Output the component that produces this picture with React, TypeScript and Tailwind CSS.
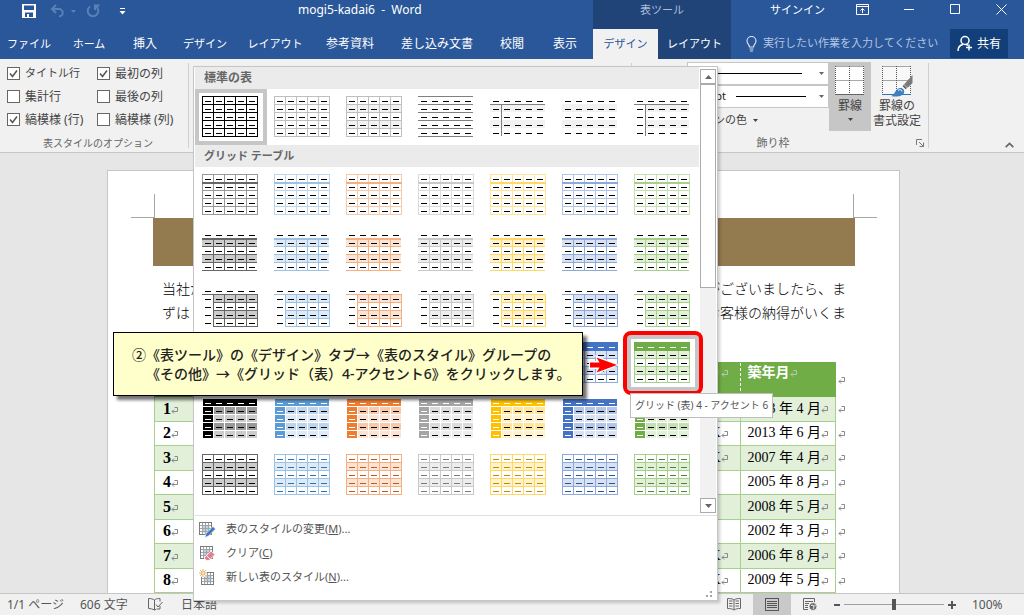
import React from "react";
import { clsx } from "clsx";

const UI_FONT = "font-['Noto_Sans','Noto_Sans_CJK_JP',sans-serif]";
const DOC_FONT = "font-['Liberation_Serif','Noto_Sans_CJK_JP',serif]";

type Palette = { name: string; light: string; mid: string; fill: string; band: string; text: string };

const PALETTES: Palette[] = [
  { name: "標準", light: "#999999", mid: "#666666", fill: "#000000", band: "#cccccc", text: "#000000" },
  { name: "アクセント 1", light: "#bdd6ee", mid: "#9cc2e5", fill: "#5b9bd5", band: "#deeaf6", text: "#2e74b5" },
  { name: "アクセント 2", light: "#f7caac", mid: "#f4b083", fill: "#ed7d31", band: "#fbe4d5", text: "#c45911" },
  { name: "アクセント 3", light: "#dbdbdb", mid: "#c9c9c9", fill: "#a5a5a5", band: "#ededed", text: "#7b7b7b" },
  { name: "アクセント 4", light: "#ffe599", mid: "#ffd966", fill: "#ffc000", band: "#fff2cc", text: "#bf8f00" },
  { name: "アクセント 5", light: "#b4c6e7", mid: "#8eaadb", fill: "#4472c4", band: "#d9e2f3", text: "#2f5496" },
  { name: "アクセント 6", light: "#c5e0b3", mid: "#a8d08d", fill: "#70ad47", band: "#e2efd9", text: "#538135" },
];

const FIVE = [0, 1, 2, 3, 4];
const SIX = [0, 1, 2, 3, 4, 5];

function Dashes({ color, header, first }: { color: string; header?: string; first?: string }) {
  return (
    <>
      {FIVE.map((r) =>
        FIVE.map((c) => (
          <rect
            key={`${r}-${c}`}
            x={3 + c * 11}
            y={5 + r * 8}
            width={6}
            height={1}
            fill={r === 0 && header ? header : c === 0 && first ? first : color}
          />
        )),
      )}
    </>
  );
}

function Bands({ color, x = 0 }: { color: string; x?: number }) {
  return (
    <>
      <rect x={x} y={8} width={55 - x} height={8} fill={color} />
      <rect x={x} y={24} width={55 - x} height={8} fill={color} />
    </>
  );
}

function Lines({ color, x0 = 0, y0 = 0 }: { color: string; x0?: number; y0?: number }) {
  return (
    <>
      {SIX.filter((i) => i * 11 >= x0).map((i) => (
        <rect key={`v${i}`} x={i * 11} y={y0} width={1} height={41 - y0} fill={color} />
      ))}
      {SIX.filter((i) => i * 8 >= y0).map((i) => (
        <rect key={`h${i}`} x={x0} y={i * 8} width={56 - x0} height={1} fill={color} />
      ))}
    </>
  );
}

function Thumb({ children }: { children: React.ReactNode }) {
  return (
    <svg width="56" height="41" viewBox="0 0 56 41" shapeRendering="crispEdges" className="shrink-0" aria-hidden="true">
      {children}
    </svg>
  );
}

function PlainThumb({ kind }: { kind: number }) {
  return (
    <Thumb>
      {(kind === 2 || kind === 4 || kind === 5) && <Bands color="#f2f2f2" />}
      {kind === 6 && <Bands color="#f2f2f2" x={11} />}
      {kind === 0 && <Lines color="#000" />}
      {(kind === 1 || kind === 2) && <Lines color="#bfbfbf" />}
      {kind === 3 && SIX.map((i) => <rect key={i} x={0} y={i * 8} width={55} height={1} fill="#7f7f7f" />)}
      {(kind === 4 || kind === 6) && (
        <>
          <rect x={0} y={8} width={55} height={1} fill="#7f7f7f" />
          <rect x={11} y={8} width={1} height={32} fill="#7f7f7f" />
        </>
      )}
      <Dashes color="#000" />
    </Thumb>
  );
}

function GridThumb({ row, p }: { row: number; p: Palette }) {
  if (row === 1)
    return (
      <Thumb>
        <Lines color={p.light} />
        <rect x={0} y={8} width={56} height={2} fill={p.mid} />
        <Dashes color="#000" />
      </Thumb>
    );
  if (row === 2)
    return (
      <Thumb>
        <Bands color={p.band} />
        {[11, 22, 33, 44].map((x) => (
          <rect key={x} x={x} y={8} width={1} height={33} fill={p.mid} />
        ))}
        {[16, 24, 32, 40].map((y) => (
          <rect key={y} x={0} y={y} width={55} height={1} fill={p.mid} />
        ))}
        <rect x={0} y={8} width={55} height={2} fill={p.mid} />
        <Dashes color="#000" />
      </Thumb>
    );
  if (row === 3)
    return (
      <Thumb>
        <Bands color={p.band} x={11} />
        <rect x={0} y={8} width={56} height={1} fill={p.mid} />
        <Lines color={p.mid} x0={11} y0={8} />
        <Dashes color="#000" />
      </Thumb>
    );
  if (row === 4)
    return (
      <Thumb>
        <Bands color={p.band} />
        <Lines color={p.mid} />
        <rect x={0} y={0} width={56} height={9} fill={p.fill} />
        <Dashes color="#000" header="#fff" />
      </Thumb>
    );
  if (row === 5)
    return (
      <Thumb>
        <rect x={1} y={1} width={54} height={7} fill={p.fill} />
        {[1, 2, 3, 4].map((r) =>
          FIVE.map((c) => (
            <rect
              key={`${r}-${c}`}
              x={1 + c * 11}
              y={1 + r * 8}
              width={10}
              height={7}
              fill={c === 0 ? p.fill : r % 2 ? p.light : p.band}
            />
          )),
        )}
        <Dashes color="#000" header="#fff" first="#fff" />
      </Thumb>
    );
  return (
    <Thumb>
      <Bands color={p.band} />
      <Lines color={p.mid} />
      <Dashes color={p.text} />
    </Thumb>
  );
}

function Tile({ selected, label, children }: { selected?: boolean; label: string; children: React.ReactNode }) {
  return (
    <button
      type="button"
      aria-label={label}
      className={clsx(
        "flex h-14 w-[72px] border-4 pt-[3px] pl-[3px]",
        selected ? "border-[#c6c6c6]" : "border-transparent",
      )}
    >
      {children}
    </button>
  );
}

function Down({ className }: { className?: string }) {
  return (
    <svg width="5" height="3" viewBox="0 0 5 3" className={className} aria-hidden="true">
      <path d="M0 0h5L2.5 3z" fill="currentColor" />
    </svg>
  );
}

function MiniGrid({ x = 0, y = 0 }: { x?: number; y?: number }) {
  return (
    <g transform={`translate(${x} ${y})`}>
      <rect x=".5" y=".5" width="12" height="12" fill="#fff" />
      <path d="M3.5 3.5h7v7h-7z" fill="#bcd3e8" />
      <path d="M3.500 1v11M6.500 1v11M9.500 1v11M1 3.500h11M1 6.500h11M1 9.500h11" stroke="#a3a3a3" fill="none" />
      <rect x=".5" y=".5" width="12" height="12" fill="none" stroke="#7c7c7c" />
    </g>
  );
}

function EditIcon() {
  return (
    <svg width="17" height="17" viewBox="0 0 17 17" aria-hidden="true">
      <MiniGrid y={1} />
      <path d="M14 5.500l2.500 2.500-7 7-3.500 1.500 1-4z" fill="#3c7abf" stroke="#fff" strokeWidth=".6" />
    </svg>
  );
}
function EraseIcon() {
  return (
    <svg width="17" height="17" viewBox="0 0 17 17" aria-hidden="true">
      <MiniGrid x={1} y={1} />
      <path d="M12 6l4 3.500-6 6H7.500L5 13z" fill="#e57f92" stroke="#fff" strokeWidth=".8" />
      <path d="M7.500 10.500l3.500 3.500" stroke="#fff" strokeWidth=".8" />
    </svg>
  );
}
function NewIcon() {
  return (
    <svg width="17" height="17" viewBox="0 0 17 17" aria-hidden="true">
      <MiniGrid x={2} y={3} />
      <circle cx="4" cy="4" r="4" fill="#fff" />
      <path d="M4 0v8M0 4h8M1.200 1.200l5.600 5.600M6.800 1.200L1.200 6.800" stroke="#e3a94b" strokeWidth=".9" />
      <circle cx="4" cy="4" r="1.400" fill="#fff" stroke="#e3a94b" strokeWidth=".7" />
    </svg>
  );
}

function Gallery() {
  const commands = [
    { icon: <EditIcon />, text: "表のスタイルの変更", key: "M", dots: true },
    { icon: <EraseIcon />, text: "クリア", key: "C", dots: false },
    { icon: <NewIcon />, text: "新しい表のスタイル", key: "N", dots: true },
  ];
  const heading = "flex h-[22px] items-center bg-[#ebebeb] pl-[9px] font-bold text-[#666]";
  return (
    <section
      aria-label="表のスタイル"
      className="absolute top-[7px] left-1 z-10 w-[525px] border border-[#c6c6c6] bg-white pl-px shadow-[2px_2px_3px_rgba(0,0,0,0.2)]"
    >
      <div className="flex border-b border-[#e1e1e1]">
        <div className="w-[504px]">
          <h2 className={clsx(heading, "text-xs")}>標準の表</h2>
          <div className="grid grid-cols-7">
            {[0, 1, 2, 3, 4, 5, 6].map((k) => (
              <Tile key={k} selected={k === 0} label={`標準の表 ${k + 1}`}>
                <PlainThumb kind={k} />
              </Tile>
            ))}
          </div>
          <h2 className={clsx(heading, "text-[11px]")}>グリッド テーブル</h2>
          <div className="grid grid-cols-7 pb-3">
            {[1, 2, 3, 4, 5, 6].map((row) =>
              PALETTES.map((p, c) => (
                <div key={`${row}-${p.name}`} className="relative">
                  <Tile selected={row === 4 && c === 6} label={`グリッド (表) ${row} - ${p.name}`}>
                    <GridThumb row={row} p={p} />
                  </Tile>
                  {row === 4 && c === 6 && (
                    <div className="pointer-events-none absolute -inset-1 z-20 rounded-lg border-4 border-[#ff0000]">
                      <div
                        role="tooltip"
                        className="absolute top-[58px] left-[3px] flex h-[25px] items-center border border-[#bdbdbd] bg-white px-1 text-[10px] whitespace-nowrap text-[#555]"
                      >
                        グリッド (表) 4 - アクセント 6
                      </div>
                    </div>
                  )}
                </div>
              )),
            )}
          </div>
        </div>
        <div className="my-0.5 ml-px flex w-4 flex-col bg-[#f1f1f1]">
          <button type="button" aria-label="上へ" className="flex h-[15px] items-center justify-center border border-[#ababab] bg-white">
            <svg width="7" height="4" viewBox="0 0 7 4" aria-hidden="true">
              <path d="M0 4h7L3.500 0z" fill="#666" />
            </svg>
          </button>
          <div className="h-[204px] border border-[#ababab] bg-white" />
          <button type="button" aria-label="下へ" className="mt-auto flex h-[15px] items-center justify-center border border-[#ababab] bg-white">
            <svg width="7" height="4" viewBox="0 0 7 4" aria-hidden="true">
              <path d="M0 0h7L3.500 4z" fill="#666" />
            </svg>
          </button>
        </div>
      </div>
      <div className="flex flex-col pt-px">
        {commands.map((c) => (
          <button key={c.key} type="button" className="flex h-6 items-center gap-2.5 pl-1 text-[11px] text-[#555]">
            {c.icon}
            <span>
              {c.text}(<span className="underline">{c.key}</span>){c.dots && "..."}
            </span>
          </button>
        ))}
      </div>
      <div className="flex h-[11px] items-end justify-end pr-1 pb-0.5">
        <svg width="7" height="7" viewBox="0 0 7 7" shapeRendering="crispEdges" aria-hidden="true">
          <path d="M4 0h2v2H4zM4 4h2v2H4zM0 4h2v2H0z" fill="#a6a6a6" />
        </svg>
      </div>
    </section>
  );
}

function Header() {
  const tabs = [
    { t: "ファイル", w: "w-[58px]", s: "text-[11px]" },
    { t: "ホーム", w: "w-[62px]", s: "text-[11px]" },
    { t: "挿入", w: "w-[50px]", s: "text-xs" },
    { t: "デザイン", w: "w-[70px]", s: "text-[11px]" },
    { t: "レイアウト", w: "w-[70px]", s: "text-[11px]" },
    { t: "参考資料", w: "w-[80px]", s: "text-xs" },
    { t: "差し込み文書", w: "w-[94px]", s: "text-xs" },
    { t: "校閲", w: "w-[56px]", s: "text-xs" },
    { t: "表示", w: "w-[50px]", s: "text-xs" },
  ];
  return (
    <header className="flex h-[59px] bg-[#2a579a] text-white">
      <div className="flex w-[593px] flex-col">
        <div className="flex h-[29px] items-start">
          <div className="flex w-[298px] items-center gap-2 pt-1 pl-[22px]">
            <button type="button" aria-label="上書き保存">
              <svg width="14" height="14" viewBox="0 0 14 14" aria-hidden="true">
                <path d="M0 0h14v14H0zM2 1.500v4.500h10V1.500zM3 8.500V13h2v-3h2v3h4V8.500z" fill="#fff" fillRule="evenodd" />
              </svg>
            </button>
            <button type="button" aria-label="元に戻す" className="ml-1.5 flex items-center gap-1.5 text-[#5a80b9]">
              <svg width="15" height="14" viewBox="0 0 15 14" fill="none" stroke="currentColor" strokeWidth="2" aria-hidden="true">
                <path d="M6 1L2 5l4 4M2 5h7a3.700 3.700 0 0 1 0 7.500" />
              </svg>
              <Down />
            </button>
            <button type="button" aria-label="やり直し" className="ml-0.5 text-[#5a80b9]">
              <svg width="15" height="14" viewBox="0 0 15 14" fill="none" stroke="currentColor" strokeWidth="2" aria-hidden="true">
                <path d="M4 2.500a5.300 5.300 0 1 0 5.500-.3M9 6V1.500h4.500" />
              </svg>
            </button>
            <button type="button" aria-label="カスタマイズ" className="ml-2.5">
              <svg width="7" height="7" viewBox="0 0 7 7" aria-hidden="true">
                <path d="M1 0h5v1H1zM.5 3h6L3.500 6.500z" fill="#fff" />
              </svg>
            </button>
          </div>
          <h1 className="pt-0.5 text-xs leading-4 whitespace-pre">{"mogi5-kadai6  -  Word"}</h1>
        </div>
        <nav className="flex h-[30px] items-center">
          {tabs.map((t) => (
            <button key={t.t} type="button" className={clsx("text-center whitespace-nowrap", t.w, t.s)}>
              {t.t}
            </button>
          ))}
        </nav>
      </div>
      <div className="flex w-[138px] flex-col bg-[#214478]">
        <div className="h-[29px] pt-0.5 text-center text-[11px] leading-4 text-[#a9bddb]">表ツール</div>
        <nav className="flex h-[30px] text-[11px]">
          <button type="button" className="w-[65px] bg-[#f1f1f1] text-[#2a579a]">デザイン</button>
          <button type="button" className="flex-1">レイアウト</button>
        </nav>
      </div>
      <div className="flex flex-1 flex-col">
        <div className="flex h-[29px] items-start justify-end pt-0.5">
          <button type="button" className="mr-[31px] text-[11px] leading-4">サインイン</button>
          <div className="flex gap-[35px] pt-0.5 pr-[17px]">
            <button type="button" aria-label="リボンの表示オプション">
              <svg width="13" height="11" viewBox="0 0 13 11" fill="none" stroke="#fff" aria-hidden="true">
                <path d="M.5.5h12v10H.5zM.5 2.500h12M6.500 9V4.500M4.500 6.500l2-2 2 2" />
              </svg>
            </button>
            <button type="button" aria-label="最小化">
              <svg width="11" height="11" viewBox="0 0 11 11" aria-hidden="true"><path d="M0 5h10v1H0z" fill="#fff" /></svg>
            </button>
            <button type="button" aria-label="最大化">
              <svg width="11" height="11" viewBox="0 0 11 11" aria-hidden="true"><path d="M.5.5h9v9h-9z" fill="none" stroke="#fff" /></svg>
            </button>
            <button type="button" aria-label="閉じる">
              <svg width="11" height="11" viewBox="0 0 11 11" aria-hidden="true"><path d="M.5.5l10 10M10.500.5l-10 10" stroke="#fff" /></svg>
            </button>
          </div>
        </div>
        <div className="flex h-[30px] items-start pr-4">
          <label className="flex h-[29px] flex-1 items-center gap-1.5 pl-[15px]">
            <svg width="11" height="16" viewBox="0 0 11 16" fill="none" stroke="#d5dff0" strokeWidth="1.200" aria-hidden="true">
              <path d="M3.500 11C3.500 8.500 1 8 1 5a4.500 4.500 0 0 1 9 0c0 3-2.500 3.500-2.500 6zM3.500 13h4M4 15h3" />
            </svg>
            <input
              aria-label="操作アシスト"
              placeholder="実行したい作業を入力してください"
              className="w-0 min-w-0 flex-1 bg-transparent text-[11px] outline-none placeholder:text-[#b3c5e2]"
            />
          </label>
          <button type="button" className="flex h-[29px] w-[58px] items-center justify-center gap-1 bg-[#123f7a] text-xs">
            <svg width="16" height="17" viewBox="0 0 16 17" fill="none" stroke="#fff" strokeWidth="1.500" aria-hidden="true">
              <circle cx="8" cy="5.500" r="4" />
              <path d="M1 16c0-4 2.500-6 5-6.500M12 9.500v6M9 12.500h6M9 9.500l2 .8" />
            </svg>
            共有
          </button>
        </div>
      </div>
    </header>
  );
}

function Check({ text, checked, small }: { text: string; checked?: boolean; small?: boolean }) {
  return (
    <label className="flex h-[23px] items-center gap-[5px] whitespace-nowrap">
      <span className="grid">
        <input
          type="checkbox"
          defaultChecked={checked}
          className="peer col-start-1 row-start-1 size-[13px] appearance-none border border-[#666] bg-white"
        />
        <svg width="13" height="13" viewBox="0 0 13 13" className="pointer-events-none invisible col-start-1 row-start-1 peer-checked:visible" aria-hidden="true">
          <path d="M3 6.500l2.500 3L10 3.500" fill="none" stroke="#555" strokeWidth="1.500" />
        </svg>
      </span>
      <span className={small ? "text-[11px]" : "text-xs"}>{text}</span>
    </label>
  );
}

function BorderGrid({ brush }: { brush?: boolean }) {
  return (
    <svg width="32" height="32" viewBox="0 0 32 32" aria-hidden="true">
      <rect x="1" y="0" width="29" height="29" fill={brush ? "#f8f8f8" : "#fff"} />
      <path d="M1.500.5h28M1.500 14.500h28M1.500 0v29M15.500 0v29M29.500 0v29" stroke="#555" strokeDasharray="1 1" fill="none" />
      <path d="M1 28.500h29" stroke={brush ? "#2e75b5" : "#666"} />
      {brush && (
        <>
          <path d="M31.500 9v8l-5 5-4-3z" fill="#7a7a7a" />
          <path d="M22.500 18l4 4-2 1.500-3-3z" fill="#666" stroke="#fff" strokeWidth=".6" />
          <path d="M10 30c4-1 4-7 9-8 3 0 5 2 4 5-2 4-9 4-13 3z" fill="#3f7fbf" />
          <path d="M17 24.500c1.500-1.500 4-.8 4 1" stroke="#fff" fill="none" />
        </>
      )}
    </svg>
  );
}

function Ribbon() {
  const caption = "flex h-[18px] items-center text-[#666]";
  const picker = "flex h-[23px] items-center justify-end border border-[#c6c6c6] bg-white pr-1 text-[#666]";
  return (
    <div className="flex h-[94px] border-b border-[#c6c6c6] bg-[#f1f1f1] text-[#444]">
      <div className="flex w-[188px] flex-col justify-between pt-[3px] pl-[7px]">
        <div className="grid grid-cols-[90px_1fr]">
          <Check text="タイトル行" checked small />
          <Check text="最初の列" checked />
          <Check text="集計行" />
          <Check text="最後の列" />
          <Check text="縞模様 (行)" checked />
          <Check text="縞模様 (列)" />
        </div>
        <div className={clsx(caption, "pl-9 text-[10px]")}>表スタイルのオプション</div>
      </div>
      <div className="my-1 w-px bg-[#d0d0d0]" />
      <div className="relative w-[442px]">
        <Gallery />
        <Callout />
      </div>
      <div className="my-1 w-px bg-[#d0d0d0]" />
      <div className="flex w-[296px] flex-col justify-between pt-[3px] pl-[55px]">
        <div className="flex">
          <div className="flex w-[142px] flex-col">
            <button type="button" aria-label="ペンのスタイル" className={picker}>
              <span className="mr-[17px] h-px w-[84px] bg-black" />
              <Down />
            </button>
            <button type="button" aria-label="ペンの太さ" className={picker}>
              <span className="text-[11px] text-[#222]">pt</span>
              <span className="mr-[13px] ml-2.5 h-px w-[70px] bg-black" />
              <Down />
            </button>
            <button type="button" className="flex h-[25px] items-center justify-end gap-1.5 pr-[71px] text-[11px]">
              ペンの色
              <Down />
            </button>
          </div>
          <button type="button" className="flex h-[69px] w-[42px] flex-col items-center bg-[#c6c6c6] pt-1 text-xs leading-4">
            <BorderGrid />
            罫線
            <Down className="mt-1" />
          </button>
          <button type="button" className="flex h-[69px] w-[52px] flex-col items-center pt-1 text-xs leading-[15px] whitespace-nowrap">
            <BorderGrid brush />
            罫線の
            <br />
            書式設定
          </button>
        </div>
        <div className={clsx(caption, "text-[11px]")}>
          <span className="w-[172px] text-center">飾り枠</span>
          <button type="button" aria-label="線種とページ罫線と網かけの設定" className="ml-auto mr-1">
            <svg width="8" height="8" viewBox="0 0 8 8" fill="none" stroke="#777" aria-hidden="true">
              <path d="M.5 6V.5H6M3 3l4 4M7.500 3.500v4h-4" />
            </svg>
          </button>
        </div>
      </div>
      <div className="my-1 w-px bg-[#d0d0d0]" />
      <button type="button" aria-label="リボンを折りたたむ" className="mt-auto mr-2.5 mb-1 ml-auto">
        <svg width="9" height="6" viewBox="0 0 9 6" fill="none" stroke="#666" strokeWidth="1.700" aria-hidden="true">
          <path d="M.7 5.200L4.500 1.500l3.800 3.700" />
        </svg>
      </button>
    </div>
  );
}

function Callout() {
  return (
    <>
      <div className="absolute top-[273px] -left-[76px] z-20 w-[470px] border border-black bg-[#ffffcc] pt-3 pb-3 pl-[18px] text-sm leading-[19px] font-medium whitespace-nowrap text-[#222] shadow-[4px_4px_3px_rgba(0,0,0,0.55)]">
        <p>②《表ツール》の《デザイン》タブ→《表のスタイル》グループの</p>
        <p className="pl-3.5">《その他》→《グリッド（表）4-アクセント6》をクリックします。</p>
      </div>
      <svg width="30" height="20" viewBox="0 0 30 20" className="absolute top-[296px] left-[400px] z-20" aria-hidden="true">
        <path d="M0 6h8L6 0l24 10L6 20l2-6H0z" fill="#fff" />
        <path d="M1 7.500h9.500L7.500 2.500 28 10 7.500 17.500l3-5H1z" fill="#ff0000" />
      </svg>
    </>
  );
}

function Mark({ light }: { light?: boolean }) {
  return (
    <svg width="7" height="7" viewBox="0 0 7 7" className="inline-block" fill="none" stroke={light ? "#b9c8b0" : "#888"} aria-hidden="true">
      <path d="M3.500.5h3v4H1M3 2.500l-2 2 2 2" />
    </svg>
  );
}

function Document() {
  const rows = [
    { n: 1, k: false, d: "2013 年 4 月" },
    { n: 2, k: true, d: "2013 年 6 月" },
    { n: 3, k: true, d: "2007 年 4 月" },
    { n: 4, k: false, d: "2005 年 8 月" },
    { n: 5, k: false, d: "2008 年 5 月" },
    { n: 6, k: false, d: "2002 年 3 月" },
    { n: 7, k: true, d: "2006 年 8 月" },
    { n: 8, k: true, d: "2009 年 5 月" },
  ];
  const line = "border border-[#a8d08d]";
  return (
    <main className="flex flex-1 justify-center bg-[#e6e6e6] pt-[17px] pr-[17px]">
      <article className={clsx("w-[793px] border border-b-0 border-[#c6c6c6] bg-white pt-[23px] pr-11 pl-[45px] text-black", DOC_FONT)}>
        <div className="-mx-[22px] flex h-6 justify-between">
          <div className="w-6 border-r border-b border-[#a6a6a6]" />
          <div className="w-6 border-b border-l border-[#a6a6a6]" />
        </div>
        <div className="h-12 bg-[#937a4f]" />
        <div className="mt-3 px-[9px] text-sm leading-6 font-light">
          <p className="flex justify-between"><span>当社が</span><span>がございましたら、ま</span></p>
          <p className="flex justify-between"><span>ずは</span><span>お客様の納得がいくま</span></p>
        </div>
        <table className="mt-9 ml-px h-[231px] w-full table-fixed border-collapse text-sm leading-5">
          <thead>
            <tr className="h-[34px]">
              <th className="w-[120px] border border-[#70ad47] bg-[#70ad47]" />
              <th className="border border-r border-[#70ad47] border-r-white bg-[#70ad47] p-0 pr-3 text-right align-top [border-right-style:dashed] text-white">
                り<Mark light />
              </th>
              <th className="w-[95px] border border-l-0 border-[#70ad47] bg-[#70ad47] p-0 pl-[7px] text-left align-top text-white">
                築年月<Mark light />
              </th>
              <td className="w-[21px] p-0 pl-0.5 text-left"><Mark /></td>
            </tr>
          </thead>
          <tbody className="[&>tr:nth-child(odd)>.cell]:bg-[#e2efd9]">
            {rows.map((r) => (
              <tr key={r.n}>
                <th className={clsx("cell p-0 pl-2 text-left text-base leading-5", line)}>{r.n}<Mark /></th>
                <td className={clsx("cell p-0 pr-3 text-right", line)}>{r.k && <>K<Mark /></>}</td>
                <td className={clsx("cell p-0 pl-[7px] whitespace-nowrap", line)}>{r.d}<Mark /></td>
                <td className="p-0 pl-0.5"><Mark /></td>
              </tr>
            ))}
          </tbody>
        </table>
      </article>
    </main>
  );
}

function StatusBar() {
  return (
    <footer className="flex h-[22px] items-center border-t border-[#c6c6c6] bg-[#f1f1f1] pl-[7px] text-xs text-[#555]">
      <span className="w-[73px]">1/1 ページ</span>
      <span className="w-[68px]">606 文字</span>
      <svg width="15" height="13" viewBox="0 0 15 13" fill="none" stroke="#666" aria-hidden="true">
        <path d="M6.500 2v10M6.500 2C5 1 3 .5.500.5v10c2 0 4 .5 6 1.500M6.500 2c1-.8 2-1.200 4-1.500M6.500 12l2-1M10.500.5H12v3M8 6.500l2 2.500 4.500-5M12 8v3H9" />
      </svg>
      <span className="ml-[18px]">日本語</span>
      <div className="ml-auto flex h-full items-center">
        <button type="button" aria-label="閲覧モード" className="mr-3">
          <svg width="14" height="13" viewBox="0 0 14 13" fill="none" stroke="#666" aria-hidden="true">
            <path d="M7 2v10M7 2C5 .5 3 .5.500.5v10c3 0 4.500.3 6.500 1.500 2-1.200 3.500-1.500 6.500-1.500V.5C11 .5 9 .5 7 2M2 3h3.500M2 5.500h3.500M2 8h3.500M8.500 3H12M8.500 5.500H12M8.500 8H12" />
          </svg>
        </button>
        <button type="button" aria-label="印刷レイアウト" className="flex h-full w-[38px] items-center justify-center bg-[#c9c9c9]">
          <svg width="14" height="13" viewBox="0 0 14 13" fill="none" stroke="#555" shapeRendering="crispEdges" aria-hidden="true">
            <path d="M.5.5h13v12H.5zM2 3.500h10M2 5.500h10M2 7.500h10M2 9.500h10" />
          </svg>
        </button>
        <button type="button" aria-label="Web レイアウト" className="ml-3">
          <svg width="15" height="13" viewBox="0 0 15 13" fill="none" stroke="#666" aria-hidden="true">
            <path d="M5 11.500H.5V.5h11V4M2 3.500h8M2 5.500h4M2 7.500h3M2 9.500h3" />
            <circle cx="10" cy="8.500" r="4" fill="#666" stroke="#f1f1f1" />
            <path d="M8 7.500l2-.5 1 2-1 2M12 6.500v2" stroke="#f1f1f1" />
          </svg>
        </button>
        <button type="button" aria-label="縮小" className="ml-4">
          <svg width="6" height="2" aria-hidden="true"><path d="M0 0h6v2H0z" fill="#555" /></svg>
        </button>
        <input
          type="range"
          aria-label="ズーム"
          defaultValue={50}
          className="mx-1 h-3 w-[100px] appearance-none bg-[linear-gradient(#a0a0a0,#a0a0a0)] bg-[length:100%_1px] bg-center bg-no-repeat [&::-webkit-slider-thumb]:h-[11px] [&::-webkit-slider-thumb]:w-1 [&::-webkit-slider-thumb]:appearance-none [&::-webkit-slider-thumb]:bg-[#555]"
        />
        <button type="button" aria-label="拡大">
          <svg width="8" height="8" aria-hidden="true"><path d="M3 0h2v3h3v2H5v3H3V5H0V3h3z" fill="#555" /></svg>
        </button>
        <span className="w-[68px] pl-4">100%</span>
      </div>
    </footer>
  );
}

export default function App() {
  return (
    <div className={clsx("flex min-h-screen flex-col overflow-hidden", UI_FONT)}>
      <Header />
      <Ribbon />
      <Document />
      <StatusBar />
    </div>
  );
}
